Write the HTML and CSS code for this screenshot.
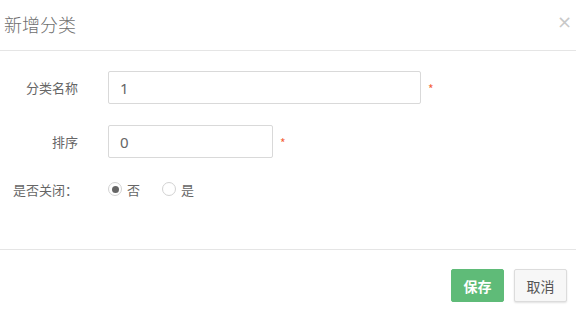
FILE: index.html
```html
<!DOCTYPE html>
<html lang="zh-CN">
<head>
<meta charset="UTF-8">
<title>新增分类</title>
<link rel="stylesheet" href="styles.css">
</head>
<body>
<div class="dialog">
  <div class="dialog-header">
    <span class="dialog-title">新增分类</span>
    <span class="dialog-close">&times;</span>
  </div>

  <div class="dialog-body">
    <div class="form-row">
      <label class="form-label">分类名称</label>
      <input class="form-input input-long" type="text" value="1">
      <span class="required">*</span>
    </div>
    <div class="form-row">
      <label class="form-label">排序</label>
      <input class="form-input input-short" type="text" value="0">
      <span class="required">*</span>
    </div>
    <div class="form-row radio-row">
      <label class="form-label">是否关闭：</label>
      <span class="radio checked"></span><span class="radio-text">否</span>
      <span class="radio"></span><span class="radio-text">是</span>
    </div>
  </div>

  <div class="dialog-footer">
    <button class="btn btn-save">保存</button>
    <button class="btn btn-cancel">取消</button>
  </div>
</div>
</body>
</html>
```

FILE: styles.css
```css
body {
  margin: 0;
  background: #fff;
  font-family: "Noto Sans CJK SC", "Noto Sans", sans-serif;
  color: #666;
}

.dialog {
  width: 576px;
  height: 321px;
}

.dialog-header {
  height: 51px;
  border-bottom: 1px solid #e5e5e5;
  display: flex;
  align-items: center;
  justify-content: space-between;
  padding: 0 4px 2px 4px;
  box-sizing: border-box;
}
.dialog-title {
  font-size: 18px;
  font-weight: 300;
  color: #6f6f6f;
}
.dialog-close {
  font-family: "DejaVu Sans", sans-serif;
  font-size: 18px;
  color: #c8c8c8;
  margin-top: -6px;
}

.dialog-body {
  height: 199px;
  padding-top: 20px;
  box-sizing: border-box;
  border-bottom: 1px solid #e5e5e5;
}

.form-row {
  display: flex;
  align-items: center;
  margin-bottom: 21px;
}
.form-label {
  width: 78px;
  margin-right: 30px;
  text-align: right;
  font-size: 13px;
  color: #666;
}
.form-input {
  height: 33px;
  box-sizing: border-box;
  border: 1px solid #d9d9d9;
  border-radius: 2px;
  padding: 0 11px;
  font-family: "Noto Sans", sans-serif;
  font-size: 15px;
  color: #666;
  outline: none;
}
.input-long { width: 313px; }
.input-short { width: 165px; }
.required {
  color: #f4623a;
  font-size: 12px;
  margin-left: 7px;
  margin-top: 2px;
}

.radio-row {
  height: 20px;
}
.radio {
  width: 14px;
  height: 14px;
  box-sizing: border-box;
  border: 1px solid #d2d2d2;
  border-radius: 50%;
  display: flex;
  align-items: center;
  justify-content: center;
}
.radio.checked::after {
  content: "";
  width: 7px;
  height: 7px;
  border-radius: 50%;
  background: #666;
}
.radio-text {
  font-size: 13px;
  color: #666;
  margin-left: 5px;
  margin-right: 22px;
}

.dialog-footer {
  display: flex;
  justify-content: flex-end;
  gap: 10px;
  padding: 19px 9px 0 0;
}
.btn {
  width: 53px;
  height: 33px;
  border-radius: 2px;
  font-family: "Noto Sans CJK SC", sans-serif;
  font-size: 14px;
  padding: 0;
}
.btn-save {
  background: #5fbb78;
  border: 1px solid #5fbb78;
  color: #fff;
  font-weight: bold;
}
.btn-cancel {
  background: #f7f7f7;
  border: 1px solid #dcdcdc;
  color: #555;
  box-shadow: 0 1px 2px rgba(0, 0, 0, 0.12);
}
```
